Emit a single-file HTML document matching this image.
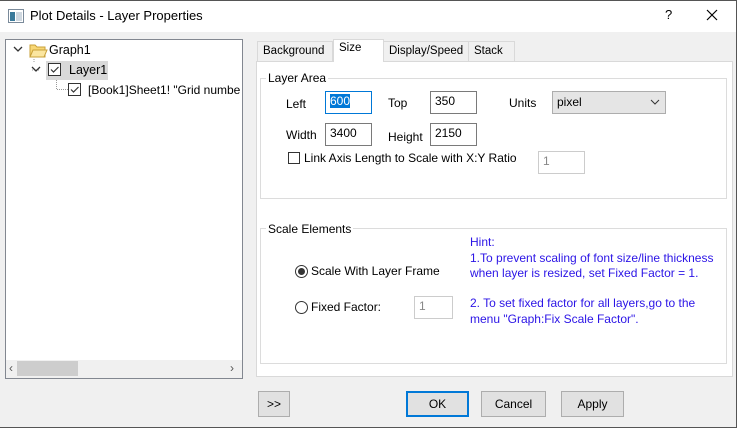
<!DOCTYPE html>
<html><head><style>
*{box-sizing:border-box}
body{margin:0;width:737px;height:428px;overflow:hidden;background:#f0f0f0;font-family:"Liberation Sans",sans-serif;font-size:12px;color:#000;position:relative}
.a{position:absolute}
.inp{position:absolute;background:#fff;border:1px solid #7a7a7a;height:23px;padding:2px 0 0 4px}
.btn{position:absolute;background:#e1e1e1;border:1px solid #adadad;height:26px;text-align:center;line-height:24px}
.grp{position:absolute;border:1px solid #dcdcdc}
.lg{position:absolute;background:#fff;padding:0 2px}
.tab{position:absolute;top:41px;height:20px;border:1px solid #d9d9d9;border-bottom:none;background:#f0f0f0;padding:3px 0 0 5px;font-size:11.5px;white-space:nowrap}
.hint{position:absolute;left:470px;color:#2b14e6;line-height:15.5px}
</style></head><body>
<div class="a" style="left:0;top:0;width:737px;height:32px;background:#fff"></div>
<div class="a" style="left:0;top:0;width:737px;height:1px;background:#555"></div>
<div class="a" style="left:736px;top:0;width:1px;height:428px;background:#555"></div>
<div class="a" style="left:0;top:427px;width:737px;height:1px;background:#555"></div>
<svg class="a" style="left:8px;top:9px" width="16" height="14"><rect x="0.5" y="0.5" width="15" height="13" fill="#fff" stroke="#7a8a9a"/><rect x="2" y="3" width="5" height="9" fill="#3a7a9a"/><rect x="8" y="3" width="6" height="9" fill="#cfd8e0"/></svg>
<div class="a" style="left:30px;top:8px;font-size:13px">Plot Details - Layer Properties</div>
<div class="a" style="left:665px;top:7px;font-size:13px">?</div>
<svg class="a" style="left:706px;top:9px" width="12" height="12"><path d="M1 1L11 11M11 1L1 11" stroke="#000" stroke-width="1.2"/></svg>

<div class="a" style="left:5px;top:39px;width:238px;height:340px;background:#fff;border:1px solid #828790"></div>
<svg class="a" style="left:12px;top:44px" width="60" height="56"><path d="M2 3l4 4 4-4" fill="none" stroke="#333" stroke-width="1.3"/><path d="M22 15v3M20 26h8" stroke="#999" stroke-dasharray="1 1"/><path d="M20 23l4 4 4-4" fill="none" stroke="#333" stroke-width="1.3"/><path d="M18 1h5l2 2h8v10H18z" fill="#f8d775" stroke="#c9a13a"/><path d="M18 13l3-7h14l-3 7z" fill="#fbe6a0" stroke="#c9a13a"/></svg>
<div class="a" style="left:49px;top:43px;font-size:12.5px">Graph1</div>
<div class="a" style="left:46px;top:61px;width:62px;height:19px;background:#d9d9d9"></div>
<svg class="a" style="left:48px;top:63px" width="14" height="14"><rect x="0.5" y="0.5" width="12" height="12" fill="#fff" stroke="#333"/><path d="M3 6.5l2.5 2.5 5-5" fill="none" stroke="#333" stroke-width="1.2"/></svg>
<div class="a" style="left:69px;top:63px;font-size:12.5px">Layer1</div>
<svg class="a" style="left:56px;top:80px" width="14" height="12"><path d="M0.5 0v9.5h13" fill="none" stroke="#999" stroke-dasharray="1 1"/></svg>
<svg class="a" style="left:68px;top:83px" width="14" height="14"><rect x="0.5" y="0.5" width="12" height="12" fill="#fff" stroke="#333"/><path d="M3 6.5l2.5 2.5 5-5" fill="none" stroke="#333" stroke-width="1.2"/></svg>
<div class="a" style="left:88px;top:83px;font-size:12px;white-space:nowrap;width:153px;overflow:hidden">[Book1]Sheet1! "Grid number</div>
<div class="a" style="left:6px;top:360px;width:236px;height:18px;background:#f0f0f0"></div>
<div class="a" style="left:17px;top:361px;width:61px;height:15px;background:#cdcdcd"></div>
<div class="a" style="left:9px;top:361px;color:#555">‹</div>
<div class="a" style="left:163px;top:361px;color:#555;left:230px">›</div>

<div class="a" style="left:256px;top:61px;width:477px;height:316px;background:#fff;border:1px solid #d9d9d9"></div>
<div class="tab" style="left:257px;width:76px">Background</div>
<div class="tab" style="left:333px;top:39px;height:23px;width:51px;background:#fff;padding-top:2px">Size</div>
<div class="tab" style="left:383px;width:86px">Display/Speed</div>
<div class="tab" style="left:468px;width:47px">Stack</div>

<div class="grp" style="left:260px;top:78px;width:467px;height:121px"></div>
<div class="lg" style="left:266px;top:71px">Layer Area</div>
<div class="a" style="left:286px;top:97px">Left</div>
<div class="inp" style="left:325px;top:91px;width:47px;border-color:#0078d7"><span style="background:#0078d7;color:#fff">600</span></div>
<div class="a" style="left:388px;top:96px">Top</div>
<div class="inp" style="left:430px;top:91px;width:47px">350</div>
<div class="a" style="left:509px;top:96px">Units</div>
<div class="a" style="left:552px;top:91px;width:114px;height:23px;background:#e5e5e5;border:1px solid #adadad;padding:3px 0 0 4px">pixel</div>
<svg class="a" style="left:650px;top:99px" width="10" height="7"><path d="M1 1l4 4 4-4" fill="none" stroke="#333"/></svg>
<div class="a" style="left:286px;top:128px">Width</div>
<div class="inp" style="left:325px;top:123px;width:47px">3400</div>
<div class="a" style="left:388px;top:130px">Height</div>
<div class="inp" style="left:430px;top:123px;width:47px">2150</div>
<div class="a" style="left:288px;top:152px;width:12px;height:12px;border:1px solid #333;background:#fff"></div>
<div class="a" style="left:304px;top:151px">Link Axis Length to Scale with X:Y Ratio</div>
<div class="inp" style="left:538px;top:151px;width:47px;border-color:#ccc;color:#888">1</div>

<div class="grp" style="left:260px;top:228px;width:467px;height:136px"></div>
<div class="lg" style="left:266px;top:222px">Scale Elements</div>
<svg class="a" style="left:295px;top:265px" width="13" height="13"><circle cx="6.5" cy="6.5" r="6" fill="#fff" stroke="#333"/><circle cx="6.5" cy="6.5" r="3.5" fill="#333"/></svg>
<div class="a" style="left:311px;top:264px">Scale With Layer Frame</div>
<svg class="a" style="left:295px;top:301px" width="13" height="13"><circle cx="6.5" cy="6.5" r="6" fill="#fff" stroke="#333"/></svg>
<div class="a" style="left:311px;top:300px">Fixed Factor:</div>
<div class="inp" style="left:414px;top:296px;width:39px;border-color:#ccc;color:#888">1</div>
<div class="hint" style="top:235px">Hint:<br>1.To prevent scaling of font size/line thickness<br>when layer is resized, set Fixed Factor = 1.</div>
<div class="hint" style="top:296px">2. To set fixed factor for all layers,go to the<br>menu "Graph:Fix Scale Factor".</div>

<div class="btn" style="left:258px;top:391px;width:32px">&gt;&gt;</div>
<div class="btn" style="left:406px;top:391px;width:63px;border:2px solid #0078d7;line-height:22px">OK</div>
<div class="btn" style="left:481px;top:391px;width:65px">Cancel</div>
<div class="btn" style="left:561px;top:391px;width:63px">Apply</div>
</body></html>
